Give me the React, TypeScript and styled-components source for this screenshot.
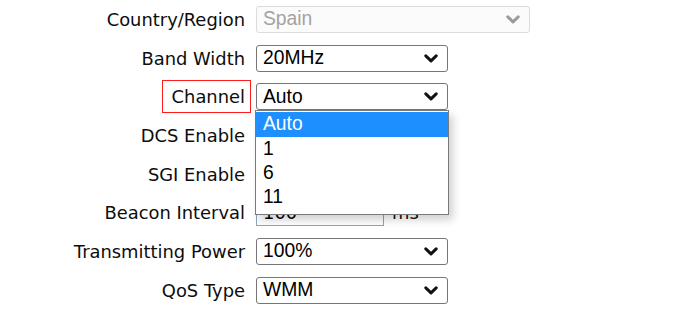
import React from "react";
import styled, { createGlobalStyle } from "styled-components";

const GlobalStyle = createGlobalStyle`
  html, body {
    margin: 0;
    padding: 0;
    background: #ffffff;
  }
`;

const Form = styled.div`
  display: grid;
  grid-template-columns: 245px auto;
  column-gap: 11px;
  grid-auto-rows: 38.7px;
  align-items: center;
  justify-items: start;
  font-family: "DejaVu Sans", Verdana, sans-serif;
`;

const Label = styled.div<{ $marked?: boolean }>`
  justify-self: end;
  font-size: 17.9px;
  color: #0d0d0d;
  white-space: nowrap;
  ${(p) =>
    p.$marked &&
    `
    outline: 1px solid #ff1c1c;
    outline-offset: 0;
    padding: 5px 5px 5px 9px;
    margin-right: -5px;
  `}
`;

const Cell = styled.div`
  position: relative;
  display: flex;
  align-items: center;
  gap: 8px;
`;

const SelectBox = styled.div<{ $width: number; $disabled?: boolean }>`
  box-sizing: border-box;
  width: ${(p) => p.$width}px;
  height: 27px;
  display: flex;
  align-items: center;
  justify-content: space-between;
  padding: 0 9px 0 6px;
  border: 1px solid ${(p) => (p.$disabled ? "#dcdcdc" : "#767676")};
  border-radius: 3px;
  background: ${(p) => (p.$disabled ? "#fbfbfb" : "#ffffff")};
  color: ${(p) => (p.$disabled ? "#a3a3a3" : "#000")};
  font-family: "Liberation Sans", Arial, sans-serif;
  font-size: 19.3px;
`;

const Dropdown = styled.div`
  position: absolute;
  top: 27px;
  left: -1px;
  z-index: 5;
  box-sizing: border-box;
  width: 194px;
  padding: 1px 0 5px;
  background: #fff;
  border: 1px solid #7a7a7a;
  box-shadow: 4px 5px 8px rgba(0, 0, 0, 0.18);
  font-family: "Liberation Sans", Arial, sans-serif;
  font-size: 19.3px;
`;

const Option = styled.div<{ $active?: boolean }>`
  height: 24.3px;
  line-height: 24.3px;
  padding-left: 7px;
  background: ${(p) => (p.$active ? "#1e8fff" : "transparent")};
  color: ${(p) => (p.$active ? "#fff" : "#000")};
`;

const TextInput = styled.div`
  box-sizing: border-box;
  width: 128px;
  height: 26px;
  border: 1px solid #8aa4c6;
  padding-left: 6px;
  display: flex;
  align-items: center;
  font-size: 17.9px;
  color: #000;
`;

const Unit = styled.span`
  font-size: 17.9px;
  color: #0d0d0d;
`;

function Chevron({ color = "#111" }: { color?: string }) {
  return (
    <svg width="14" height="9" viewBox="0 0 14 9">
      <polyline
        points="1.8,1.8 7,6.8 12.2,1.8"
        fill="none"
        stroke={color}
        strokeWidth="3"
        strokeLinecap="round"
        strokeLinejoin="round"
      />
    </svg>
  );
}

function Select({
  value,
  width = 192,
  disabled,
}: {
  value: string;
  width?: number;
  disabled?: boolean;
}) {
  return (
    <SelectBox $width={width} $disabled={disabled}>
      <span>{value}</span>
      <Chevron color={disabled ? "#9a9a9a" : "#111"} />
    </SelectBox>
  );
}

const channels = ["Auto", "1", "6", "11"];

export default function App() {
  return (
    <>
      <GlobalStyle />
      <Form>
        <Label>Country/Region</Label>
        <Cell>
          <Select value="Spain" width={274} disabled />
        </Cell>

        <Label>Band Width</Label>
        <Cell>
          <Select value="20MHz" />
        </Cell>

        <Label $marked>Channel</Label>
        <Cell>
          <Select value="Auto" />
          <Dropdown>
            {channels.map((c) => (
              <Option key={c} $active={c === "Auto"}>
                {c}
              </Option>
            ))}
          </Dropdown>
        </Cell>

        <Label>DCS Enable</Label>
        <Cell />

        <Label>SGI Enable</Label>
        <Cell />

        <Label>Beacon Interval</Label>
        <Cell>
          <TextInput>100</TextInput>
          <Unit>ms</Unit>
        </Cell>

        <Label>Transmitting Power</Label>
        <Cell>
          <Select value="100%" />
        </Cell>

        <Label>QoS Type</Label>
        <Cell>
          <Select value="WMM" />
        </Cell>
      </Form>
    </>
  );
}
